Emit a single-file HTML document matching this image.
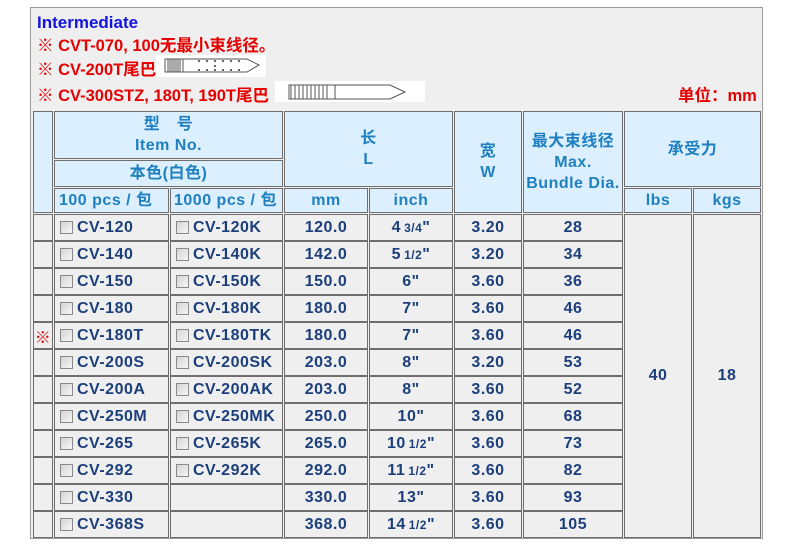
<!DOCTYPE html>
<html><head><meta charset="utf-8"><style>
*{margin:0;padding:0}
body{width:800px;height:553px;background:#fff;position:relative;overflow:hidden;font-family:"Liberation Sans","Noto Sans CJK SC",sans-serif;}
#box{position:absolute;left:30px;top:7px;width:733px;height:532px;background:#efefef;border:1px solid #9a9a9a;box-sizing:border-box}
.t{position:absolute;font-weight:bold;font-size:16px;white-space:nowrap;line-height:20px}
.r{color:#e60000}
.c{position:absolute;box-sizing:border-box;border:1px solid #6e6e6e;background:#efefef;display:flex;align-items:center;justify-content:center;font-weight:bold;font-size:16px;color:#1c3f7c;white-space:nowrap;letter-spacing:0.5px}
.h{background:#dcefff;color:#1f80c0;flex-direction:column;line-height:21px;text-align:center}
.n{justify-content:flex-start;padding-left:5px}
.cb{display:inline-block;width:11px;height:11px;border:1px solid #8a8a8a;background:linear-gradient(135deg,#d4d4d4,#f6f6f6);margin-right:4px}
small{font-size:12px;margin-left:3px}
</style></head><body>
<div id="box"></div>
<div class="t" style="left:37px;top:13px;color:#1414e0;font-size:17px">Intermediate</div>
<div class="t r" style="left:37px;top:36px;font-size:16.5px">※ CVT-070, 100无最小束线径。</div>
<div class="t r" style="left:37px;top:60px;font-size:16.5px">※ CV-200T尾巴</div>
<div class="t r" style="left:37px;top:86px;font-size:16.5px">※ CV-300STZ, 180T, 190T尾巴</div>
<div class="t r" style="left:678px;top:86px;font-size:16.5px">单位：mm</div>
<svg style="position:absolute;left:156px;top:55px" width="110" height="22"><rect width="110" height="22" fill="#fff"/>
<path d="M9 4 H91 L103 10 L91 17 H9 Z" fill="none" stroke="#555" stroke-width="1"/>
<path d="M12 4V17M14 4V17M16 4V17M18 4V17M20 4V17M22 4V17M24 4V17M27 4V17" stroke="#555"/>
<g fill="#666"><rect x="42" y="5" width="2" height="2"/><rect x="50" y="5" width="2" height="2"/><rect x="58" y="5" width="2" height="2"/><rect x="66" y="5" width="2" height="2"/><rect x="74" y="5" width="2" height="2"/><rect x="82" y="5" width="2" height="2"/><rect x="42" y="14" width="2" height="2"/><rect x="50" y="14" width="2" height="2"/><rect x="58" y="14" width="2" height="2"/><rect x="66" y="14" width="2" height="2"/><rect x="74" y="14" width="2" height="2"/><rect x="82" y="14" width="2" height="2"/><rect x="58" y="10" width="2" height="2"/></g></svg>
<svg style="position:absolute;left:275px;top:81px" width="150" height="21"><rect width="150" height="21" fill="#fff"/>
<path d="M14 4 H115 L130 11 L115 18 H14 Z" fill="none" stroke="#555"/>
<path d="M16 4V18M20 4V18M24 4V18M28 4V18M32 4V18M36 4V18M40 4V18M44 4V18M48 4V18M52 4V18M60 4V18" stroke="#555"/></svg>

<div class="c h" style="left:33px;top:111px;width:20px;height:102px"></div>
<div class="c h" style="left:54px;top:111px;width:229px;height:48px"><div>型　号</div><div>Item No.</div></div>
<div class="c h" style="left:54px;top:160px;width:229px;height:27px">本色(白色)</div>
<div class="c h" style="left:54px;top:188px;width:115px;height:25px;align-items:flex-start;padding-left:4px">100 pcs / 包</div>
<div class="c h" style="left:170px;top:188px;width:113px;height:25px;align-items:flex-start;padding-left:3px">1000 pcs / 包</div>
<div class="c h" style="left:284px;top:111px;width:169px;height:76px"><div>长</div><div>L</div></div>
<div class="c h" style="left:284px;top:188px;width:84px;height:25px">mm</div>
<div class="c h" style="left:369px;top:188px;width:84px;height:25px">inch</div>
<div class="c h" style="left:454px;top:111px;width:68px;height:102px"><div>宽</div><div>W</div></div>
<div class="c h" style="left:523px;top:111px;width:100px;height:102px"><div>最大束线径</div><div>Max.</div><div>Bundle Dia.</div></div>
<div class="c h" style="left:624px;top:111px;width:137px;height:76px">承受力</div>
<div class="c h" style="left:624px;top:188px;width:68px;height:25px">lbs</div>
<div class="c h" style="left:693px;top:188px;width:68px;height:25px">kgs</div>
<div class="c" style="left:624px;top:214px;width:68px;height:324px">40</div>
<div class="c" style="left:693px;top:214px;width:68px;height:324px">18</div>

<div style="position:absolute;left:0;top:214px">
<div class="c" style="left:33px;top:0;width:20px;height:27px"></div><div class="c n" style="left:54px;top:0;width:115px;height:27px"><i class="cb"></i>CV-120</div><div class="c n" style="left:170px;top:0;width:113px;height:27px"><i class="cb"></i>CV-120K</div><div class="c" style="left:284px;top:0;width:84px;height:27px">120.0</div><div class="c" style="left:369px;top:0;width:84px;height:27px">4<small>3/4</small>"</div><div class="c" style="left:454px;top:0;width:68px;height:27px">3.20</div><div class="c" style="left:523px;top:0;width:100px;height:27px">28</div>
</div>
<div style="position:absolute;left:0;top:241px">
<div class="c" style="left:33px;top:0;width:20px;height:27px"></div><div class="c n" style="left:54px;top:0;width:115px;height:27px"><i class="cb"></i>CV-140</div><div class="c n" style="left:170px;top:0;width:113px;height:27px"><i class="cb"></i>CV-140K</div><div class="c" style="left:284px;top:0;width:84px;height:27px">142.0</div><div class="c" style="left:369px;top:0;width:84px;height:27px">5<small>1/2</small>"</div><div class="c" style="left:454px;top:0;width:68px;height:27px">3.20</div><div class="c" style="left:523px;top:0;width:100px;height:27px">34</div>
</div>
<div style="position:absolute;left:0;top:268px">
<div class="c" style="left:33px;top:0;width:20px;height:27px"></div><div class="c n" style="left:54px;top:0;width:115px;height:27px"><i class="cb"></i>CV-150</div><div class="c n" style="left:170px;top:0;width:113px;height:27px"><i class="cb"></i>CV-150K</div><div class="c" style="left:284px;top:0;width:84px;height:27px">150.0</div><div class="c" style="left:369px;top:0;width:84px;height:27px">6"</div><div class="c" style="left:454px;top:0;width:68px;height:27px">3.60</div><div class="c" style="left:523px;top:0;width:100px;height:27px">36</div>
</div>
<div style="position:absolute;left:0;top:295px">
<div class="c" style="left:33px;top:0;width:20px;height:27px"></div><div class="c n" style="left:54px;top:0;width:115px;height:27px"><i class="cb"></i>CV-180</div><div class="c n" style="left:170px;top:0;width:113px;height:27px"><i class="cb"></i>CV-180K</div><div class="c" style="left:284px;top:0;width:84px;height:27px">180.0</div><div class="c" style="left:369px;top:0;width:84px;height:27px">7"</div><div class="c" style="left:454px;top:0;width:68px;height:27px">3.60</div><div class="c" style="left:523px;top:0;width:100px;height:27px">46</div>
</div>
<div style="position:absolute;left:0;top:322px">
<div class="c" style="left:33px;top:0;width:20px;height:27px;color:#e60000;font-weight:normal">※</div><div class="c n" style="left:54px;top:0;width:115px;height:27px"><i class="cb"></i>CV-180T</div><div class="c n" style="left:170px;top:0;width:113px;height:27px"><i class="cb"></i>CV-180TK</div><div class="c" style="left:284px;top:0;width:84px;height:27px">180.0</div><div class="c" style="left:369px;top:0;width:84px;height:27px">7"</div><div class="c" style="left:454px;top:0;width:68px;height:27px">3.60</div><div class="c" style="left:523px;top:0;width:100px;height:27px">46</div>
</div>
<div style="position:absolute;left:0;top:349px">
<div class="c" style="left:33px;top:0;width:20px;height:27px"></div><div class="c n" style="left:54px;top:0;width:115px;height:27px"><i class="cb"></i>CV-200S</div><div class="c n" style="left:170px;top:0;width:113px;height:27px"><i class="cb"></i>CV-200SK</div><div class="c" style="left:284px;top:0;width:84px;height:27px">203.0</div><div class="c" style="left:369px;top:0;width:84px;height:27px">8"</div><div class="c" style="left:454px;top:0;width:68px;height:27px">3.20</div><div class="c" style="left:523px;top:0;width:100px;height:27px">53</div>
</div>
<div style="position:absolute;left:0;top:376px">
<div class="c" style="left:33px;top:0;width:20px;height:27px"></div><div class="c n" style="left:54px;top:0;width:115px;height:27px"><i class="cb"></i>CV-200A</div><div class="c n" style="left:170px;top:0;width:113px;height:27px"><i class="cb"></i>CV-200AK</div><div class="c" style="left:284px;top:0;width:84px;height:27px">203.0</div><div class="c" style="left:369px;top:0;width:84px;height:27px">8"</div><div class="c" style="left:454px;top:0;width:68px;height:27px">3.60</div><div class="c" style="left:523px;top:0;width:100px;height:27px">52</div>
</div>
<div style="position:absolute;left:0;top:403px">
<div class="c" style="left:33px;top:0;width:20px;height:27px"></div><div class="c n" style="left:54px;top:0;width:115px;height:27px"><i class="cb"></i>CV-250M</div><div class="c n" style="left:170px;top:0;width:113px;height:27px"><i class="cb"></i>CV-250MK</div><div class="c" style="left:284px;top:0;width:84px;height:27px">250.0</div><div class="c" style="left:369px;top:0;width:84px;height:27px">10"</div><div class="c" style="left:454px;top:0;width:68px;height:27px">3.60</div><div class="c" style="left:523px;top:0;width:100px;height:27px">68</div>
</div>
<div style="position:absolute;left:0;top:430px">
<div class="c" style="left:33px;top:0;width:20px;height:27px"></div><div class="c n" style="left:54px;top:0;width:115px;height:27px"><i class="cb"></i>CV-265</div><div class="c n" style="left:170px;top:0;width:113px;height:27px"><i class="cb"></i>CV-265K</div><div class="c" style="left:284px;top:0;width:84px;height:27px">265.0</div><div class="c" style="left:369px;top:0;width:84px;height:27px">10<small>1/2</small>"</div><div class="c" style="left:454px;top:0;width:68px;height:27px">3.60</div><div class="c" style="left:523px;top:0;width:100px;height:27px">73</div>
</div>
<div style="position:absolute;left:0;top:457px">
<div class="c" style="left:33px;top:0;width:20px;height:27px"></div><div class="c n" style="left:54px;top:0;width:115px;height:27px"><i class="cb"></i>CV-292</div><div class="c n" style="left:170px;top:0;width:113px;height:27px"><i class="cb"></i>CV-292K</div><div class="c" style="left:284px;top:0;width:84px;height:27px">292.0</div><div class="c" style="left:369px;top:0;width:84px;height:27px">11<small>1/2</small>"</div><div class="c" style="left:454px;top:0;width:68px;height:27px">3.60</div><div class="c" style="left:523px;top:0;width:100px;height:27px">82</div>
</div>
<div style="position:absolute;left:0;top:484px">
<div class="c" style="left:33px;top:0;width:20px;height:27px"></div><div class="c n" style="left:54px;top:0;width:115px;height:27px"><i class="cb"></i>CV-330</div><div class="c n" style="left:170px;top:0;width:113px;height:27px"></div><div class="c" style="left:284px;top:0;width:84px;height:27px">330.0</div><div class="c" style="left:369px;top:0;width:84px;height:27px">13"</div><div class="c" style="left:454px;top:0;width:68px;height:27px">3.60</div><div class="c" style="left:523px;top:0;width:100px;height:27px">93</div>
</div>
<div style="position:absolute;left:0;top:511px">
<div class="c" style="left:33px;top:0;width:20px;height:27px"></div><div class="c n" style="left:54px;top:0;width:115px;height:27px"><i class="cb"></i>CV-368S</div><div class="c n" style="left:170px;top:0;width:113px;height:27px"></div><div class="c" style="left:284px;top:0;width:84px;height:27px">368.0</div><div class="c" style="left:369px;top:0;width:84px;height:27px">14<small>1/2</small>"</div><div class="c" style="left:454px;top:0;width:68px;height:27px">3.60</div><div class="c" style="left:523px;top:0;width:100px;height:27px">105</div>
</div>
</body></html>
